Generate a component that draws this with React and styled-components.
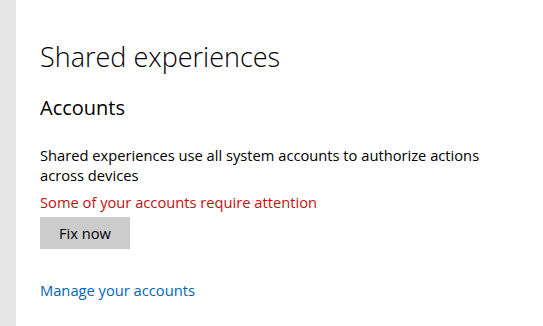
import styled, { createGlobalStyle } from 'styled-components';

const GlobalStyle = createGlobalStyle`
    html, body {
        margin: 0;
        padding: 0;
        background: #ffffff;
    }
    body {
        font-family: "Open Sans", "Noto Sans", sans-serif;
        color: #000000;
    }
`;

const App = () => {
    return (
        <>
            <GlobalStyle />
            <Page>
                <Rail />
                <Content>
                    <Title>Shared experiences</Title>
                    <SectionTitle>Accounts</SectionTitle>
                    <Body>Shared experiences use all system accounts to authorize actions across devices</Body>
                    <Warning>Some of your accounts require attention</Warning>
                    <Button>Fix now</Button>
                    <Link href="#">Manage your accounts</Link>
                </Content>
            </Page>
        </>
    )
}

export default App;

const Page = styled.div`
    display: flex;
    width: 543px;
    height: 326px;
    overflow: hidden;
`;

const Rail = styled.div`
    width: 16px;
    flex-shrink: 0;
    background: #e6e6e6;
`;

const Content = styled.div`
    display: flex;
    flex-direction: column;
    align-items: flex-start;
    padding: 38px 0 0 24px;
`;

const Title = styled.h1`
    margin: 0;
    font-size: 27px;
    font-weight: 300;
    line-height: 38px;
`;

const SectionTitle = styled.h2`
    margin: 18px 0 0;
    font-size: 20px;
    font-weight: 400;
    line-height: 28px;
`;

const Body = styled.p`
    margin: 23px 0 0;
    width: 460px;
    font-size: 14.7px;
    line-height: 20px;
`;

const Warning = styled.p`
    margin: 7px 0 0;
    font-size: 14.7px;
    line-height: 20px;
    color: #c50f0f;
`;

const Button = styled.button`
    margin-top: 5px;
    width: 90px;
    height: 32px;
    border: none;
    background: #cccccc;
    font-family: inherit;
    font-size: 14.7px;
    color: #000000;
    padding: 0;
`;

const Link = styled.a`
    margin-top: 31px;
    font-size: 14.7px;
    line-height: 20px;
    color: #0067b8;
    text-decoration: none;
`;
